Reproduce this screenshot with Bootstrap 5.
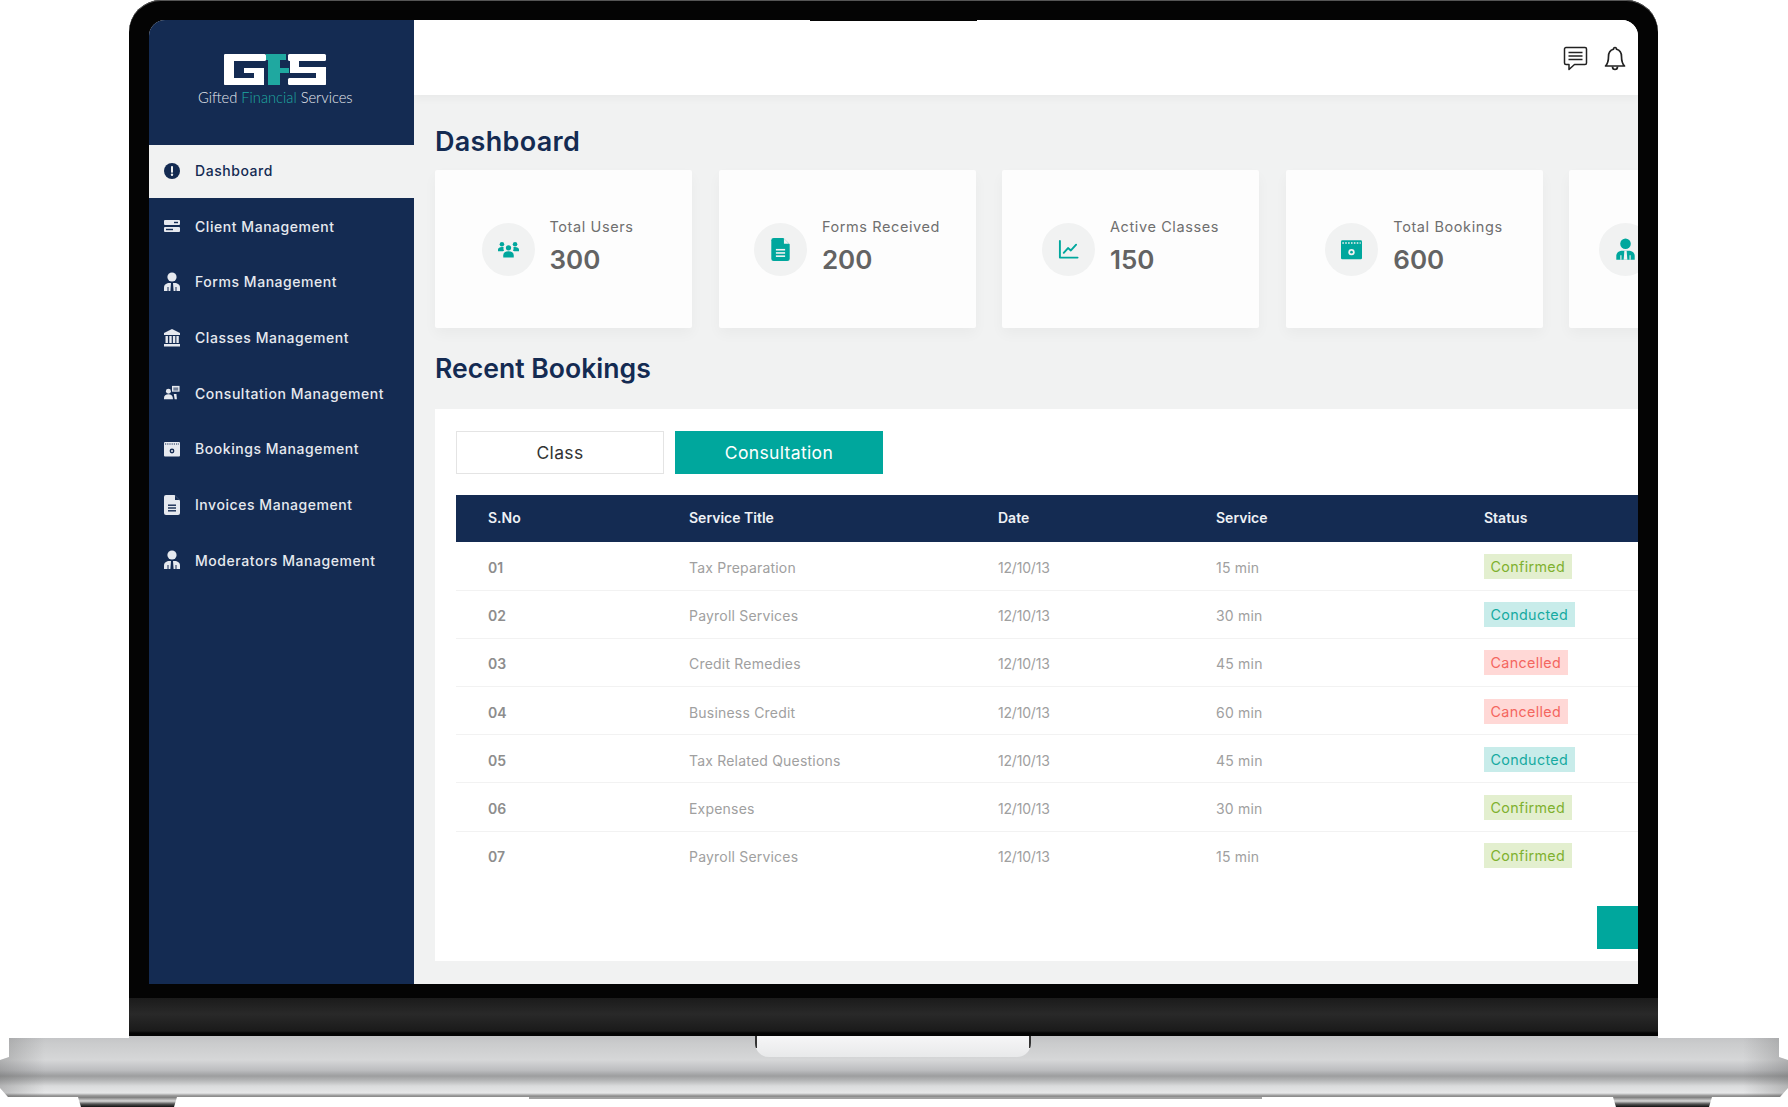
<!DOCTYPE html>
<html lang="en">
<head>
    <meta charset="UTF-8">
    <meta name="viewport" content="width=device-width, initial-scale=1.0">
    <title>GFS Dashboard</title>
    <link href="https://cdn.jsdelivr.net/npm/bootstrap@5.3.0/dist/css/bootstrap.min.css" rel="stylesheet">
    <style>
        :root { --navy: #142b52; --teal: #00a79d; --page: #f1f2f2; }
        body { background: #fff; overflow: hidden; font-family: Inter, "Noto Sans", sans-serif; height: 1107px; }

        /* laptop frame */
        .lid { width: 1529px; height: 1036px; margin-left: 129px; padding: 20px 20px 0; background: #040404; border-radius: 32px 32px 0 0; box-shadow: inset 0 1px 0 #555; }
        .screen { height: 964px; border-radius: 16px 16px 0 0; overflow: hidden; position: relative; background: var(--page); }
        .cam { position: absolute; top: 0; left: 661px; width: 167px; height: 1px; background: #040404; z-index: 3; }
        .chin { height: 52px; margin: 0 -20px; background: linear-gradient(#040404 14px, #1b1b1b 14px, #292929 30px, #1a1a1a 47px, #040404 49px); }
        .base { height: 61px; position: relative;
            background: linear-gradient(90deg, rgba(90,90,90,.3), rgba(90,90,90,0) 45px, rgba(90,90,90,0) calc(100% - 45px), rgba(90,90,90,.3)),
                linear-gradient(#c2c3c5, #cbcccd 8px, #d6d7d8 24px, #bdbec0 34px, #9d9e9f 40px, #b2b3b4 44px, #dadbdc 50px, #e6e7e8 57px, #8d8d8d 60px);
            clip-path: polygon(9px 2px, 129px 2px, 129px 0, 1658px 0, 1658px 2px, calc(100% - 9px) 2px, calc(100% - 9px) 21px, 100% 24px, 100% calc(100% - 9px), calc(100% - 8px) 100%, 8px 100%, 0 calc(100% - 9px), 0 24px, 9px 21px); }
        .notch { position: absolute; top: 0; left: 755px; width: 276px; height: 21px; border-radius: 0 0 14px 14px;
            background: linear-gradient(90deg, #333 2px, transparent 2px, transparent calc(100% - 2px), #333 calc(100% - 2px)) top / 100% 12px no-repeat, linear-gradient(#f6f6f7, #e8e9ea); }
        .feet { padding: 0 76px 0 78px; }
        .foot { width: 99px; height: 10px; background: linear-gradient(#777, #d8d8d8 40%, #555 70%, #111); clip-path: polygon(0 0, 100% 0, 97% 100%, 3% 100%); }
        .lip { width: 733px; height: 2px; background: #a2a2a2; }

        /* sidebar */
        .sidebar { width: 265px; background: var(--navy); --cut: var(--navy); }
        .brand { height: 125px; padding-top: 34px; }
        .brand svg { width: 103px; height: 35px; display: block; margin-left: 75px; }
        .brand-name { font-family: Lato, sans-serif; font-weight: 300; font-size: 14.7px; line-height: 18px; margin: -1px 0 0 49px; color: #e6e9ee; white-space: nowrap; }
        .brand-name span { color: #1fa8a0; }
        .side-nav .nav-link { height: 53px; margin-bottom: 2.7px; padding: 0 0 2px 15px; color: #e6e9ef; font-size: 14px; font-weight: 500; letter-spacing: .55px; gap: 15px; white-space: nowrap; }
        .side-nav .nav-link svg { width: 16px; height: 20px; flex-shrink: 0; }
        .side-nav .nav-link.active { background: var(--page); color: var(--navy); --cut: var(--page); }

        /* main */
        .topbar { height: 75px; background: #fff; padding: 2px 12px 0 0; gap: 16px; box-shadow: 0 4px 8px rgba(0,0,0,.035); position: relative; }
        .topbar svg { color: #222; }
        .content { padding: 30px 0 0 21px; overflow: hidden; }
        .page-title { font-size: 27px; line-height: 34px; font-weight: 600; color: var(--navy); margin: 0 0 11px; letter-spacing: .3px; white-space: nowrap; }
        .stats { gap: 26.5px; }
        .stat { width: 257px; height: 158px; flex-shrink: 0; background: #fdfdfd; border: 0; border-radius: 2px; box-shadow: 0 6px 14px rgba(0,0,0,.035); gap: 15px; --cut: var(--page); }
        .stat.cut-off { padding-left: 30px; }
        .stat-icon { width: 53px; height: 53px; background: var(--page); color: var(--teal); flex-shrink: 0; }
        .stat-icon svg { width: 21px; height: 23px; }
        .stat-text { min-width: 96px; margin-top: -3px; }
        .stat-label { font-size: 14.5px; line-height: 20px; letter-spacing: .6px; color: #6f6f6f; white-space: nowrap; margin-bottom: 5px; }
        .stat-value { font-size: 26px; line-height: 36px; font-weight: 600; color: #636363; }
        .recent { font-size: 26.6px; letter-spacing: 0; margin: 23px 0 24px; }
        .panel { width: 1391px; height: 552px; padding: 22px 21px 0; background: #fff; }
        .tabs { column-gap: 11px; }
        .tab-btn { width: 208px; height: 43px; padding: 1px 0 0; font-size: 17.5px; letter-spacing: .35px; border-radius: 0; }
        .tab-btn.off { background: #fff; border: 1px solid #e4e4e4; color: #333; }
        .tab-btn.on, .btn-teal { background: var(--teal); border: 1px solid var(--teal); color: #fff; }
        .bookings { table-layout: fixed; width: 1349px; margin: 21px 0 26.5px; font-size: 14px; }
        .bookings th { background: var(--navy); color: #eef1f5; font-weight: 600; height: 47px; padding: 0 0 2px 32px; vertical-align: middle; border: 0; }
        .bookings td { height: 48.2px; padding: 3px 0 0 32px; vertical-align: middle; color: #a0a0a0; letter-spacing: .2px; border-bottom: 1px solid #f2f2f2; }
        .bookings td:first-child { color: #8d8d8d; font-weight: 600; letter-spacing: 0; }
        .bookings td:nth-child(3) { letter-spacing: -.2px; }
        .bookings td:last-child { padding-top: 1px; }
        .bookings tr:last-child td { border-bottom: 0; }
        .col-a { width: 201px; } .col-b { width: 309px; } .col-c { width: 218px; } .col-d { width: 268px; }
        .status { display: inline-block; height: 25px; line-height: 25px; padding: 0 6.5px; font-size: 14.3px; letter-spacing: .35px; border-radius: 0; }
        .confirmed { background: #e3efcf; color: #7fb12f; }
        .conducted { background: #c8ecea; color: #16aaa1; }
        .cancelled { background: #ffd8d6; color: #f4665f; }
        .btn-teal { width: 208px; height: 43px; padding: 0; border-radius: 0; }
    </style>
</head>
<body>
    <svg width="0" height="0" class="d-block position-absolute">
        <symbol id="i-info" viewBox="0 0 16 16"><circle cx="8" cy="8" r="8" fill="currentColor"/><rect x="7" y="3.200" width="2" height="6.400" fill="var(--cut)"/><circle cx="8" cy="11.800" r="1.200" fill="var(--cut)"/></symbol>
        <symbol id="i-server" viewBox="0 0 16 16"><rect y="2" width="16" height="5" rx="1" fill="currentColor"/><rect y="9" width="16" height="5" rx="1" fill="currentColor"/><rect x="2" y="10.800" width="7" height="1.400" fill="var(--cut)"/><rect x="10" y="3.800" width="4" height="1.400" fill="var(--cut)"/></symbol>
        <symbol id="i-tie" viewBox="0 0 16 20"><circle cx="8" cy="5" r="4.600" fill="currentColor"/><path d="M0 19v-3.500C0 12.500 2.500 11 5.500 11h5c3 0 5.500 1.500 5.500 4.500V19z" fill="currentColor"/><path d="M7 11h2l.6 8H6.400zM3.500 15h1v4h-1zM11.500 15h1v4h-1z" fill="var(--cut)"/></symbol>
        <symbol id="i-bank" viewBox="0 0 16 18"><path d="M8 0l8 4v2H0V4z" fill="currentColor"/><rect x="1.500" y="7" width="2.400" height="7" fill="currentColor"/><rect x="5.300" y="7" width="2.400" height="7" fill="currentColor"/><rect x="8.900" y="7" width="2.400" height="7" fill="currentColor"/><rect x="12.400" y="7" width="2.400" height="7" fill="currentColor"/><rect y="15" width="16" height="2.500" fill="currentColor"/></symbol>
        <symbol id="i-consult" viewBox="0 0 18 16"><circle cx="5" cy="6" r="2.800" fill="currentColor"/><path d="M0 15v-1.500C0 11 2 9.500 5 9.500s4.500 1.500 5 4V15z" fill="currentColor"/><rect x="9" y="0" width="8.500" height="6.500" fill="currentColor"/><rect x="10.500" y="2" width="5.500" height="1" fill="var(--cut)"/><rect x="10.500" y="4" width="5.500" height="1" fill="var(--cut)"/><path d="M11 9l3 0 .5 6h2L12 15z" fill="currentColor"/></symbol>
        <symbol id="i-cal" viewBox="0 0 16 16"><rect y="1" width="16" height="14.500" rx="1" fill="currentColor"/><path d="M1 3h14" stroke="var(--cut)" stroke-width="1.100" stroke-dasharray="1.200 1"/><circle cx="8" cy="10" r="2.400" fill="var(--cut)"/><circle cx="8" cy="10" r="1" fill="currentColor"/></symbol>
        <symbol id="i-file" viewBox="0 0 16 20"><path d="M2 0h8.500L16 5.500V18a2 2 0 0 1-2 2H2a2 2 0 0 1-2-2V2a2 2 0 0 1 2-2z" fill="currentColor"/><path d="M11 .5V5h4.500z" fill="var(--cut)"/><rect x="4" y="9.500" width="8" height="1.400" fill="var(--cut)"/><rect x="4" y="12.300" width="8" height="1.400" fill="var(--cut)"/><rect x="4" y="15.100" width="8" height="1.400" fill="var(--cut)"/></symbol>
        <symbol id="i-users" viewBox="0 0 24 20"><circle cx="12" cy="8" r="3" fill="currentColor"/><circle cx="4.500" cy="4" r="2.600" fill="currentColor"/><circle cx="19.500" cy="4" r="2.600" fill="currentColor"/><path d="M6 19v-2.500c0-3 2.500-4.500 6-4.500s6 1.500 6 4.500V19z" fill="currentColor"/><path d="M0 12V10c0-2 2-3 4.500-3 1 0 1.500.2 2 .5-.5 1.500-.3 2.800.5 3.500-.700.300-1.200.600-1.500 1zM24 12v-2c0-2-2-3-4.500-3-1 0-1.500.2-2 .5.500 1.500.3 2.800-.5 3.500.700.300 1.200.600 1.500 1z" fill="currentColor"/></symbol>
        <symbol id="i-chart" viewBox="0 0 22 22"><path d="M2 2v17.500h18.500" fill="none" stroke="currentColor" stroke-width="2" stroke-linecap="round" stroke-linejoin="round"/><path d="M6 14.500l4.500-5 3 2.500L19 6" fill="none" stroke="currentColor" stroke-width="2" stroke-linecap="round" stroke-linejoin="round"/></symbol>
    </svg>

    <div class="lid">
        <div class="screen d-flex">
            <span class="cam"></span>
            <aside class="sidebar flex-shrink-0">
                <div class="brand">
                    <svg viewBox="0 0 103 35" role="img" aria-label="GFS logo">
                        <g fill="#fff">
                            <rect width="42" height="7" rx="1.500"/><rect width="10" height="31" rx="1.500"/><rect y="24" width="40" height="7" rx="1.500"/><rect x="30" y="14" width="10" height="17"/><rect x="20" y="14" width="20" height="5"/>
                            <rect x="64" width="38" height="7" rx="1.500"/><rect x="66" width="9" height="19" rx="1.500"/><rect x="66" y="13" width="36" height="6"/><rect x="92" y="13" width="10" height="18" rx="1.500"/><rect x="64" y="24" width="38" height="7" rx="1.500"/>
                        </g>
                        <g fill="#1fa8a0"><rect x="42" width="20" height="6"/><rect x="44" y="6" width="12" height="25"/><rect x="56" y="14" width="9" height="5"/></g>
                    </svg>
                    <div class="brand-name">Gifted <span>Financial</span> Services</div>
                </div>
                <nav class="nav flex-column side-nav">
                    <a class="nav-link active d-flex align-items-center" href="#"><svg><use href="#i-info"/></svg>Dashboard</a>
                    <a class="nav-link d-flex align-items-center" href="#"><svg><use href="#i-server"/></svg>Client Management</a>
                    <a class="nav-link d-flex align-items-center" href="#"><svg><use href="#i-tie"/></svg>Forms Management</a>
                    <a class="nav-link d-flex align-items-center" href="#"><svg><use href="#i-bank"/></svg>Classes Management</a>
                    <a class="nav-link d-flex align-items-center" href="#"><svg><use href="#i-consult"/></svg>Consultation Management</a>
                    <a class="nav-link d-flex align-items-center" href="#"><svg><use href="#i-cal"/></svg>Bookings Management</a>
                    <a class="nav-link d-flex align-items-center" href="#"><svg><use href="#i-file"/></svg>Invoices Management</a>
                    <a class="nav-link d-flex align-items-center" href="#"><svg><use href="#i-tie"/></svg>Moderators Management</a>
                </nav>
            </aside>
            <div class="flex-grow-1 overflow-hidden">
                <header class="topbar d-flex justify-content-end align-items-center">
                    <svg width="25" height="25" viewBox="0 0 25 25" fill="none" stroke="currentColor" stroke-width="1.500" stroke-linejoin="round"><path d="M3 1.500h19a1.500 1.500 0 0 1 1.500 1.500v14a1.500 1.500 0 0 1-1.500 1.500H11.500L6 23.500V18.500H3A1.500 1.500 0 0 1 1.500 17V3A1.500 1.500 0 0 1 3 1.500z"/><path d="M5.500 6.500h14M5.500 10h14M5.500 13.500h14"/></svg>
                    <svg width="22" height="25" viewBox="0 0 22 25" fill="none" stroke="currentColor" stroke-width="1.700" stroke-linejoin="round"><path d="M11 1.500c-1 0-1.500.8-1.500 1.800C6 4.300 4.500 7 4.500 10.500c0 5-1 7.500-3 9.500h19c-2-2-3-4.500-3-9.500 0-3.500-1.500-6.200-5-7.200 0-1-.5-1.800-1.500-1.800z"/><path d="M8.500 20.500c0 2 1 3 2.500 3s2.500-1 2.500-3"/></svg>
                </header>
                <main class="content">
                    <h2 class="page-title">Dashboard</h2>
                    <div class="stats d-flex">
                        <div class="stat card flex-row align-items-center justify-content-center"><div class="stat-icon rounded-circle d-flex align-items-center justify-content-center"><svg><use href="#i-users"/></svg></div><div class="stat-text"><div class="stat-label">Total Users</div><div class="stat-value">300</div></div></div>
                        <div class="stat card flex-row align-items-center justify-content-center"><div class="stat-icon rounded-circle d-flex align-items-center justify-content-center"><svg><use href="#i-file"/></svg></div><div class="stat-text"><div class="stat-label">Forms Received</div><div class="stat-value">200</div></div></div>
                        <div class="stat card flex-row align-items-center justify-content-center"><div class="stat-icon rounded-circle d-flex align-items-center justify-content-center"><svg><use href="#i-chart"/></svg></div><div class="stat-text"><div class="stat-label">Active Classes</div><div class="stat-value">150</div></div></div>
                        <div class="stat card flex-row align-items-center justify-content-center"><div class="stat-icon rounded-circle d-flex align-items-center justify-content-center"><svg><use href="#i-cal"/></svg></div><div class="stat-text"><div class="stat-label">Total Bookings</div><div class="stat-value">600</div></div></div>
                        <div class="stat cut-off card flex-row align-items-center"><div class="stat-icon rounded-circle d-flex align-items-center justify-content-center"><svg><use href="#i-tie"/></svg></div></div>
                    </div>
                    <h2 class="page-title recent">Recent Bookings</h2>
                    <section class="panel">
                        <div class="d-flex tabs">
                            <button class="btn tab-btn off" type="button">Class</button>
                            <button class="btn tab-btn on" type="button">Consultation</button>
                        </div>
                        <table class="table bookings">
                            <colgroup><col class="col-a"><col class="col-b"><col class="col-c"><col class="col-d"><col></colgroup>
                            <thead><tr><th>S.No</th><th>Service Title</th><th>Date</th><th>Service</th><th>Status</th></tr></thead>
                            <tbody>
                                <tr><td>01</td><td>Tax Preparation</td><td>12/10/13</td><td>15 min</td><td><span class="status confirmed">Confirmed</span></td></tr>
                                <tr><td>02</td><td>Payroll Services</td><td>12/10/13</td><td>30 min</td><td><span class="status conducted">Conducted</span></td></tr>
                                <tr><td>03</td><td>Credit Remedies</td><td>12/10/13</td><td>45 min</td><td><span class="status cancelled">Cancelled</span></td></tr>
                                <tr><td>04</td><td>Business Credit</td><td>12/10/13</td><td>60 min</td><td><span class="status cancelled">Cancelled</span></td></tr>
                                <tr><td>05</td><td>Tax Related Questions</td><td>12/10/13</td><td>45 min</td><td><span class="status conducted">Conducted</span></td></tr>
                                <tr><td>06</td><td>Expenses</td><td>12/10/13</td><td>30 min</td><td><span class="status confirmed">Confirmed</span></td></tr>
                                <tr><td>07</td><td>Payroll Services</td><td>12/10/13</td><td>15 min</td><td><span class="status confirmed">Confirmed</span></td></tr>
                            </tbody>
                        </table>
                        <div class="d-flex justify-content-end"><button class="btn btn-teal" type="button" aria-label="Next"></button></div>
                    </section>
                </main>
            </div>
        </div>
        <div class="chin"></div>
    </div>
    <div class="base"><span class="notch"></span></div>
    <div class="feet d-flex justify-content-between">
        <span class="foot"></span><span class="lip"></span><span class="foot"></span>
    </div>

    <script src="https://cdn.jsdelivr.net/npm/bootstrap@5.3.0/dist/js/bootstrap.bundle.min.js"></script>
</body>
</html>
